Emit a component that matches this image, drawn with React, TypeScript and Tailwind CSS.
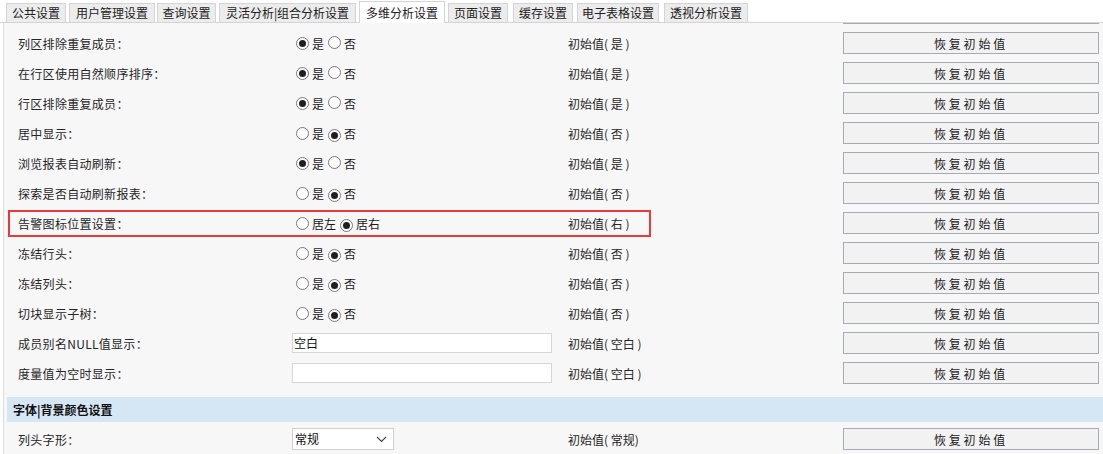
import React from "react";

const FONT = '"Microsoft YaHei", "Noto Sans CJK SC", "Noto Sans", sans-serif';

const tabs: { t: string; w: string }[] = [
  { t: "公共设置", w: "w-[60px]" },
  { t: "用户管理设置", w: "w-[86px] ml-[3px]" },
  { t: "查询设置", w: "w-[59px] ml-[2px]" },
  { t: "灵活分析|组合分析设置", w: "w-[137px] ml-[3px]" },
  { t: "多维分析设置", w: "w-[86px] ml-[3px]" },
  { t: "页面设置", w: "w-[60px] ml-[3px]" },
  { t: "缓存设置", w: "w-[60px] ml-[5px]" },
  { t: "电子表格设置", w: "w-[82px] ml-[4px]" },
  { t: "透视分析设置", w: "w-[84px] ml-[5px]" },
];

type Row =
  | { label: string; kind: "radio"; opts: [string, string]; sel: 0 | 1; init: string; hl?: boolean }
  | { label: string; kind: "input"; value: string; init: string };

const rows: Row[] = [
  { label: "列区排除重复成员：", kind: "radio", opts: ["是", "否"], sel: 0, init: "初始值( 是 )" },
  { label: "在行区使用自然顺序排序：", kind: "radio", opts: ["是", "否"], sel: 0, init: "初始值( 是 )" },
  { label: "行区排除重复成员：", kind: "radio", opts: ["是", "否"], sel: 0, init: "初始值( 是 )" },
  { label: "居中显示：", kind: "radio", opts: ["是", "否"], sel: 1, init: "初始值( 否 )" },
  { label: "浏览报表自动刷新：", kind: "radio", opts: ["是", "否"], sel: 0, init: "初始值( 是 )" },
  { label: "探索是否自动刷新报表：", kind: "radio", opts: ["是", "否"], sel: 1, init: "初始值( 否 )" },
  { label: "告警图标位置设置：", kind: "radio", opts: ["居左", "居右"], sel: 1, init: "初始值( 右 )", hl: true },
  { label: "冻结行头：", kind: "radio", opts: ["是", "否"], sel: 1, init: "初始值( 否 )" },
  { label: "冻结列头：", kind: "radio", opts: ["是", "否"], sel: 1, init: "初始值( 否 )" },
  { label: "切块显示子树：", kind: "radio", opts: ["是", "否"], sel: 1, init: "初始值( 否 )" },
  { label: "成员别名NULL值显示：", kind: "input", value: "空白", init: "初始值( 空白 )" },
  { label: "度量值为空时显示：", kind: "input", value: "", init: "初始值( 空白 )" },
];

function Radio({ on }: { on: boolean }) {
  return (
    <span className="inline-flex h-[13px] w-[13px] shrink-0 items-center justify-center rounded-full border border-[#7a7a7a] bg-white">
      {on && <span className="h-[7px] w-[7px] rounded-full bg-[#1f1f1f]" />}
    </span>
  );
}

function ResetButton() {
  return (
    <div className="flex h-[22px] w-[256px] items-center justify-center border border-[#a3abb6] bg-[#f2f2f2] pt-px text-[12px] tracking-[2.8px] text-[#222]">
      恢复初始值
    </div>
  );
}

function RowView({ r }: { r: Row }) {
  return (
    <div className="relative flex h-[30px] items-center">
      {"hl" in r && r.hl && (
        <div className="pointer-events-none absolute left-[1px] top-[2px] h-[27px] w-[643px] border-2 border-[#e63b3b]" />
      )}
      <div className="w-[285px] pl-[11px] pt-px text-[12px] tracking-[0.3px] text-[#262626]">{r.label}</div>
      <div className="w-[276px]">
        {r.kind === "radio" ? (
          <div className="flex items-center pl-[4px] pt-px text-[12px] text-[#1a1a1a]">
            <Radio on={r.sel === 0} />
            <span className="ml-[3px]">{r.opts[0]}</span>
            <span className="ml-[4px]">
              <Radio on={r.sel === 1} />
            </span>
            <span className="ml-[3px]">{r.opts[1]}</span>
          </div>
        ) : (
          <div className="flex h-[20px] w-[260px] items-center border border-[#d6d6d6] bg-white pl-[1px] text-[12px] text-[#111]">
            {r.value}
          </div>
        )}
      </div>
      <div className="w-[275px] pt-px text-[12px] text-[#262626]">{r.init}</div>
      <ResetButton />
    </div>
  );
}

export default function App() {
  return (
    <div className="h-[454px] w-[1103px] overflow-hidden bg-white" style={{ fontFamily: FONT }}>
      {/* tab bar */}
      <div className="flex h-[23px] items-end border-b border-[#d4d4d4] pl-[6px]">
        {tabs.map(({ t, w }, i) => {
          const active = i === 4;
          return (
            <div
              key={t}
              className={
                active
                  ? `relative -mb-px flex h-[22px] items-center justify-center border border-b-0 border-[#d4d4d4] bg-white text-[12px] text-[#222] ${w}`
                  : `flex h-[19px] items-center justify-center border border-b-0 border-[#d4d4d4] bg-[#ececec] text-[12px] text-[#222] ${w}`
              }
            >
              {t}
            </div>
          );
        })}
      </div>
      {/* content */}
      <div className="ml-[3px] h-[431px] border-l border-[#dcdcdc] bg-[#f7f7f7] pl-[3px]">
        <div className="flex h-[5px] items-start">
          <div className="ml-[836px] h-px w-[256px] bg-[#a3abb6]" />
        </div>
        {rows.map((r) => (
          <RowView key={r.label} r={r} />
        ))}
        <div className="mt-[9px] flex h-[25px] items-center bg-[#d5e6f5] pl-[6px] text-[12px] font-bold text-[#111]">
          字体|背景颜色设置
        </div>
        <div className="mt-[2px] flex h-[30px] items-center">
          <div className="w-[285px] pl-[11px] pt-px text-[12px] tracking-[0.3px] text-[#262626]">列头字形：</div>
          <div className="w-[276px]">
            <div className="flex h-[22px] w-[102px] items-center justify-between border border-[#cfcfcf] bg-white pl-[2px] pr-[6px] text-[12px] text-[#111]">
              <span>常规</span>
              <svg width="11" height="7" viewBox="0 0 11 7" fill="none">
                <path d="M1 1l4.5 4.5L10 1" stroke="#444" strokeWidth="1.1" />
              </svg>
            </div>
          </div>
          <div className="w-[275px] pt-px text-[12px] text-[#262626]">初始值( 常规)</div>
          <ResetButton />
        </div>
      </div>
    </div>
  );
}
